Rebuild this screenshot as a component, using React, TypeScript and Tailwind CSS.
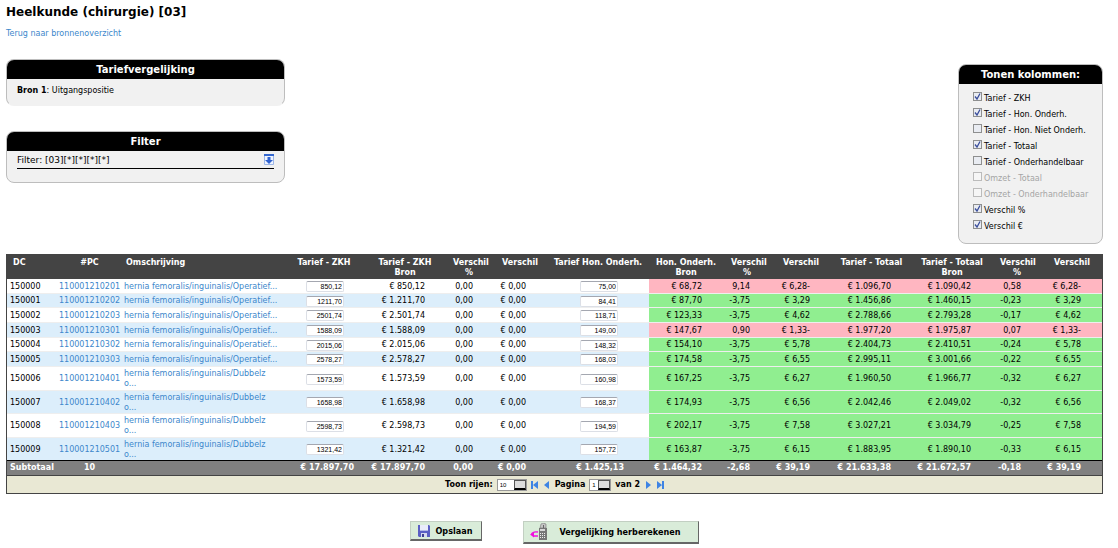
import type { ReactNode } from "react";
import clsx from "clsx";

interface Row {
  dc: string;
  pc: string;
  description: string;
  zkh: string;
  honorarium: string;
  values: string[];
  tone: "up" | "down";
}

interface ColumnOption {
  label: string;
  checked?: boolean;
  disabled?: boolean;
}

const COLUMN_OPTIONS: ColumnOption[] = [
  { label: "Tarief - ZKH", checked: true },
  { label: "Tarief - Hon. Onderh.", checked: true },
  { label: "Tarief - Hon. Niet Onderh." },
  { label: "Tarief - Totaal", checked: true },
  { label: "Tarief - Onderhandelbaar" },
  { label: "Omzet - Totaal", disabled: true },
  { label: "Omzet - Onderhandelbaar", disabled: true },
  { label: "Verschil %", checked: true },
  { label: "Verschil €", checked: true },
];

const OPERATIVE = "hernia femoralis/inguinalis/Operatief...";
const DOUBLE = "hernia femoralis/inguinalis/Dubbelz\no...";

// values: ZKH bron, honorarium bron, %, €, totaal, totaal bron, %, €
const ROWS: Row[] = [
  { dc: "150000", pc: "110001210201", description: OPERATIVE, zkh: "850,12", honorarium: "75,00", tone: "up", values: ["€ 850,12", "€ 68,72", "9,14", "€ 6,28-", "€ 1.096,70", "€ 1.090,42", "0,58", "€ 6,28-"] },
  { dc: "150001", pc: "110001210202", description: OPERATIVE, zkh: "1211,70", honorarium: "84,41", tone: "down", values: ["€ 1.211,70", "€ 87,70", "-3,75", "€ 3,29", "€ 1.456,86", "€ 1.460,15", "-0,23", "€ 3,29"] },
  { dc: "150002", pc: "110001210203", description: OPERATIVE, zkh: "2501,74", honorarium: "118,71", tone: "down", values: ["€ 2.501,74", "€ 123,33", "-3,75", "€ 4,62", "€ 2.788,66", "€ 2.793,28", "-0,17", "€ 4,62"] },
  { dc: "150003", pc: "110001210301", description: OPERATIVE, zkh: "1588,09", honorarium: "149,00", tone: "up", values: ["€ 1.588,09", "€ 147,67", "0,90", "€ 1,33-", "€ 1.977,20", "€ 1.975,87", "0,07", "€ 1,33-"] },
  { dc: "150004", pc: "110001210302", description: OPERATIVE, zkh: "2015,06", honorarium: "148,32", tone: "down", values: ["€ 2.015,06", "€ 154,10", "-3,75", "€ 5,78", "€ 2.404,73", "€ 2.410,51", "-0,24", "€ 5,78"] },
  { dc: "150005", pc: "110001210303", description: OPERATIVE, zkh: "2578,27", honorarium: "168,03", tone: "down", values: ["€ 2.578,27", "€ 174,58", "-3,75", "€ 6,55", "€ 2.995,11", "€ 3.001,66", "-0,22", "€ 6,55"] },
  { dc: "150006", pc: "110001210401", description: DOUBLE, zkh: "1573,59", honorarium: "160,98", tone: "down", values: ["€ 1.573,59", "€ 167,25", "-3,75", "€ 6,27", "€ 1.960,50", "€ 1.966,77", "-0,32", "€ 6,27"] },
  { dc: "150007", pc: "110001210402", description: DOUBLE, zkh: "1658,98", honorarium: "168,37", tone: "down", values: ["€ 1.658,98", "€ 174,93", "-3,75", "€ 6,56", "€ 2.042,46", "€ 2.049,02", "-0,32", "€ 6,56"] },
  { dc: "150008", pc: "110001210403", description: DOUBLE, zkh: "2598,73", honorarium: "194,59", tone: "down", values: ["€ 2.598,73", "€ 202,17", "-3,75", "€ 7,58", "€ 3.027,21", "€ 3.034,79", "-0,25", "€ 7,58"] },
  { dc: "150009", pc: "110001210501", description: DOUBLE, zkh: "1321,42", honorarium: "157,72", tone: "down", values: ["€ 1.321,42", "€ 163,87", "-3,75", "€ 6,15", "€ 1.883,95", "€ 1.890,10", "-0,33", "€ 6,15"] },
];

const TONE = {
  up: "bg-[#ffb6c1]",
  down: "bg-[#90ee90]",
};

const HEADERS = [
  "Tarief - ZKH",
  "Tarief - ZKH Bron",
  "Verschil %",
  "Verschil",
  "Tarief Hon. Onderh.",
  "Hon. Onderh. Bron",
  "Verschil %",
  "Verschil",
  "Tarief - Totaal",
  "Tarief - Totaal Bron",
  "Verschil %",
  "Verschil",
];

const COLUMN_WIDTHS = [
  "w-[50px]",
  "w-[65px]",
  "w-[161px]",
  "w-[82px]",
  "w-[80px]",
  "w-[48px]",
  "w-[54px]",
  "w-[102px]",
  "w-[74px]",
  "w-[48px]",
  "w-[60px]",
  "w-[81px]",
  "w-[80px]",
  "w-[50px]",
  "w-[60px]",
];

function Panel({ title, className, children }: { title: string; className?: string; children: ReactNode }) {
  return (
    <section className={clsx("overflow-hidden rounded-lg border border-[#bdbdbd] bg-[#f1f1f1]", className)}>
      <h2 className="bg-black text-center text-[10px] leading-[19px] font-bold text-white">{title}</h2>
      {children}
    </section>
  );
}

function PriceInput({ label, value }: { label: string; value: string }) {
  return (
    <input
      type="text"
      aria-label={label}
      defaultValue={value}
      className="block h-[11px] w-[38px] rounded-xs border border-[#dcdfe6] border-t-[#a4a7b0] bg-white pr-px text-right font-['Liberation_Sans',sans-serif] text-[7px] leading-[9px]"
    />
  );
}

function PagerSelect({ label, value, className }: { label: string; value: string; className: string }) {
  return (
    <span className={clsx("relative inline-flex h-3 border border-[#999] bg-white", className)}>
      <select
        aria-label={label}
        defaultValue={value}
        className="w-full appearance-none pl-[2px] font-['Liberation_Sans',sans-serif] text-[6px] leading-[10px] font-normal"
      >
        <option>{value}</option>
      </select>
      <span className="pointer-events-none absolute inset-y-0 right-0 w-3 border border-[#555] border-b-2 border-b-black bg-[#dcdcdc]" />
    </span>
  );
}

function PagerButton({ label, children }: { label: string; children: ReactNode }) {
  return (
    <button type="button" aria-label={label}>
      <svg viewBox="0 0 8 8" className="size-2" fill="#3f84e4">
        {children}
      </svg>
    </button>
  );
}

function FloppyIcon() {
  return (
    <svg viewBox="0 0 14 14" className="size-[14px]">
      <path d="M1 1h11l1 1v11H2l-1-1z" fill="#5a5fc4" />
      <path d="M3 1h8v6H3z" fill="#e9ecfa" />
      <path d="M3 6h8v1H3z" fill="#b4b9e6" />
      <path d="M4 9h6v4H4z" fill="#d6d9ee" />
      <path d="M5 10h2v3H5z" fill="#3c3f8f" />
    </svg>
  );
}

function RecalculateIcon() {
  return (
    <svg viewBox="0 0 18 18" className="size-[18px]">
      <path d="M10 5l1-4 2-1 3 1v4z" fill="#c4c4c4" stroke="#777" strokeWidth=".6" />
      <path d="M13 2h1v5h-1z" fill="#666" />
      <path d="M9 5h8v12H9z" fill="#777" />
      <path d="M10 6h5v2h-5z" fill="#d8d8d8" />
      <path d="M10 10h1v1h-1zm2 0h1v1h-1zm2 0h1v1h-1zm-4 2h1v1h-1zm2 0h1v1h-1zm2 0h1v1h-1zm-4 2h1v1h-1zm2 0h1v1h-1zm2 0h1v1h-1z" fill="#eee" />
      <path d="M8 9C5 8.500 2.500 9 1.500 11M3 13h5" fill="none" stroke="#f010e0" strokeWidth="1.300" />
      <path d="M0 11.500l4-2v5z" fill="#f010e0" />
    </svg>
  );
}

function TariffRow({ row, striped }: { row: Row; striped: boolean }) {
  const tone = TONE[row.tone];
  const tall = row.description.includes("\n");
  const [zkhBron, ...compared] = row.values;
  return (
    <tr
      className={clsx(
        striped ? "bg-[#dceefb]" : "bg-white",
        tall ? "h-[23px] odd:h-6" : "h-[15px] nth-[3n+2]:h-[14px]"
      )}
    >
      <td className="pl-[3px]">{row.dc}</td>
      <td className="pl-[2px] text-[#3c87cb]">
        <a href="#pc">{row.pc}</a>
      </td>
      <td className="pl-[2px] whitespace-pre text-[#3c87cb]">
        <a href="#omschrijving">{row.description}</a>
      </td>
      <td className="pr-[21px]">
        <div className="flex justify-end">
          <PriceInput label={`Tarief ZKH ${row.pc}`} value={row.zkh} />
        </div>
      </td>
      <td className="pr-5 text-right">{zkhBron}</td>
      <td className="pr-5 text-right">0,00</td>
      <td className="pr-[21px] text-right">€ 0,00</td>
      <td className="pr-[31px]">
        <div className="flex justify-end">
          <PriceInput label={`Tarief honorarium ${row.pc}`} value={row.honorarium} />
        </div>
      </td>
      {compared.map((value, i) => (
        <td key={i} className={clsx("pr-[21px] text-right", tone)}>
          {value}
        </td>
      ))}
    </tr>
  );
}

function TariffTable() {
  return (
    <div className="border-x border-b border-[#444]">
      <table className="w-full table-fixed border-separate border-spacing-0 text-[8px] leading-[10px]">
        <colgroup>
          {COLUMN_WIDTHS.map((width, i) => (
            <col key={i} className={width} />
          ))}
        </colgroup>
        <thead className="bg-[#444] text-white">
          <tr className="h-[25px] align-top [&>th]:pt-1">
            <th className="pl-[6px] text-left">DC</th>
            <th className="text-center">#PC</th>
            <th className="pl-1 text-left">Omschrijving</th>
            {HEADERS.map((header, i) => (
              <th key={i} className={clsx("text-center", header.includes("Hon.") ? "px-0" : "px-2")}>
                {header}
              </th>
            ))}
          </tr>
        </thead>
        <tbody className="[&_td]:border-b [&_td]:border-[#eee] [&_td]:pt-px [&>tr:last-child>td]:border-black">
          {ROWS.map((row, i) => (
            <TariffRow key={row.pc} row={row} striped={i % 2 === 1} />
          ))}
        </tbody>
        <tfoot>
          <tr className="h-[15px] bg-[#808080] text-right font-bold whitespace-nowrap text-white [&>*]:border-b [&>*]:border-[#444]">
            <th scope="row" className="pl-[3px] text-left">Subtotaal</th>
            <td className="text-center">10</td>
            <td />
            <td className="pr-[11px]">€ 17.897,70</td>
            <td className="pr-5">€ 17.897,70</td>
            <td className="pr-5">0,00</td>
            <td className="pr-[21px]">€ 0,00</td>
            <td className="pr-[25px]">€ 1.425,13</td>
            <td className="pr-[21px]">€ 1.464,32</td>
            <td className="pr-[21px]">-2,68</td>
            <td className="pr-[21px]">€ 39,19</td>
            <td className="pr-[21px]">€ 21.633,38</td>
            <td className="pr-[21px]">€ 21.672,57</td>
            <td className="pr-[21px]">-0,18</td>
            <td className="pr-[21px]">€ 39,19</td>
          </tr>
        </tfoot>
      </table>
      <nav aria-label="Paginering" className="flex h-[17px] items-center justify-center gap-1 bg-[#e9e8d4] text-[8px] leading-3 font-bold">
        <span>Toon rijen:</span>
        <PagerSelect label="Toon rijen" value="10" className="w-[30px]" />
        <PagerButton label="Eerste pagina">
          <path d="M0 0h2v8H0zM7 0v8L2 4z" />
        </PagerButton>
        <PagerButton label="Vorige pagina">
          <path d="M6 0v8L1 4z" />
        </PagerButton>
        <span>Pagina</span>
        <PagerSelect label="Pagina" value="1" className="w-[22px]" />
        <span>van 2</span>
        <PagerButton label="Volgende pagina">
          <path d="M2 0v8l5-4z" />
        </PagerButton>
        <PagerButton label="Laatste pagina">
          <path d="M6 0h2v8H6zM1 0v8l5-4z" />
        </PagerButton>
      </nav>
    </div>
  );
}

const BUTTON_STYLE =
  "flex items-center border border-[#c2cfc2] border-r-[#666] border-b-2 border-b-[#666] bg-[#d9ecd9] font-['DejaVu_Sans_Condensed','DejaVu_Sans',sans-serif] text-[9px] leading-3 font-bold";

export default function App() {
  return (
    <main className="bg-white pt-1 pr-[15px] pb-1 pl-[6px] font-['DejaVu_Sans',Verdana,sans-serif] text-[8px] leading-3 text-black">
      <h1 className="text-[12px] leading-4 font-bold">Heelkunde (chirurgie) [03]</h1>
      <a href="#bronnen" className="mt-2 block w-fit text-[#3c87cb]">
        Terug naar bronnenoverzicht
      </a>

      <div className="mt-[19px] flex items-start justify-between">
        <div className="flex w-[279px] flex-col gap-[25px]">
          <Panel title="Tariefvergelijking" className="border-b-transparent">
            <p className="px-[10px] pt-[6px] pb-2">
              <b>Bron 1</b>: Uitgangspositie
            </p>
          </Panel>
          <Panel title="Filter">
            <div className="mx-[10px] mb-[13px] flex h-[18px] items-center justify-between border-b border-black">
              <span className="text-[9px]">Filter: [03][*][*][*][*]</span>
              <button type="button" aria-label="Filter openen">
                <svg viewBox="0 0 10 11" className="h-[11px] w-[10px]">
                  <path d="M.5.500h9v10h-9z" fill="#eef4ff" stroke="#9db6e8" />
                  <path d="M0 0h10v2H0z" fill="#3467cf" />
                  <path d="M3.500 3h3v3H9L5 10 1 6h2.500z" fill="#2f62d0" />
                </svg>
              </button>
            </div>
          </Panel>
        </div>

        <Panel title="Tonen kolommen:" className="mt-[5px] w-[145px]">
          <div className="pt-[6px] pb-[9px] pl-[14px]">
            {COLUMN_OPTIONS.map((option) => (
              <label
                key={option.label}
                className={clsx("flex h-4 items-start gap-[2px] leading-[18px] whitespace-nowrap", option.disabled && "text-[#a5a5a5]")}
              >
                <span className="relative mt-[2px] flex">
                  <input
                    type="checkbox"
                    defaultChecked={option.checked}
                    disabled={option.disabled}
                    className="peer size-[9px] appearance-none border border-[#8e8f8f] bg-[#e9ecf2] disabled:border-[#bbb] disabled:bg-[#f6f6f6]"
                  />
                  <svg viewBox="0 0 9 9" className="pointer-events-none absolute inset-0 hidden size-[9px] peer-checked:block">
                    <path d="M2 4.500l2 2.500 3-5.500" fill="none" stroke="#3b4f9c" strokeWidth="1.300" />
                  </svg>
                </span>
                {option.label}
              </label>
            ))}
          </div>
        </Panel>
      </div>

      <div className="mt-[10px]">
        <TariffTable />
      </div>

      <div className="mt-[27px] flex items-start justify-center gap-[41px]">
        <button type="submit" className={clsx(BUTTON_STYLE, "h-5 gap-1 pr-[9px] pl-[6px]")}>
          <FloppyIcon />
          Opslaan
        </button>
        <button type="button" className={clsx(BUTTON_STYLE, "h-[23px] gap-[11px] pr-[17px] pl-[6px]")}>
          <RecalculateIcon />
          Vergelijking herberekenen
        </button>
      </div>
    </main>
  );
}
